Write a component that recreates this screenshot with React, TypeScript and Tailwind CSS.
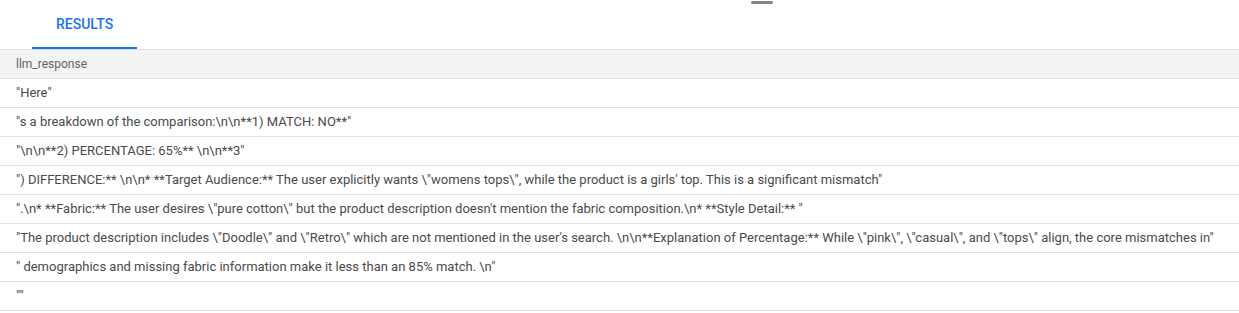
import React from "react";

const rows = [
  '"Here"',
  '"s a breakdown of the comparison:\\n\\n**1) MATCH: NO**"',
  '"\\n\\n**2) PERCENTAGE: 65%** \\n\\n**3"',
  '") DIFFERENCE:** \\n\\n* **Target Audience:** The user explicitly wants \\"womens tops\\", while the product is a girls\' top. This is a significant mismatch"',
  '".\\n* **Fabric:** The user desires \\"pure cotton\\" but the product description doesn\'t mention the fabric composition.\\n* **Style Detail:** "',
  '"The product description includes \\"Doodle\\" and \\"Retro\\" which are not mentioned in the user\'s search. \\n\\n**Explanation of Percentage:** While \\"pink\\", \\"casual\\", and \\"tops\\" align, the core mismatches in"',
  '" demographics and missing fabric information make it less than an 85% match. \\n"',
  '""',
];

export default function App() {
  return (
    <div className="relative w-[1239px] h-[313px] bg-white overflow-hidden font-['Roboto',sans-serif]">
      {/* drag handle */}
      <div className="absolute left-[751px] top-[1px] w-[22px] h-[3px] rounded-full bg-[#80868b]" />

      {/* tabs */}
      <div className="flex h-[49px] pl-8">
        <div className="flex items-center justify-center px-6 pt-[2px] h-full border-b-2 border-[#1a73e8] text-[14px] font-medium text-[#1a73e8]">
          RESULTS
        </div>
      </div>

      {/* table */}
      <div className="border-t border-[#e0e0e0]">
        <div className="h-[29px] flex items-center px-4 bg-[#f3f3f3] border-b border-[#e0e0e0] text-[12px] text-[#5f6368]">
          llm_response
        </div>
        {rows.map((r, i) => (
          <div
            key={i}
            className="h-[29px] flex items-center px-4 border-b border-[#e0e0e0] text-[13px] text-[#4a4a4a] whitespace-pre"
          >
            {r}
          </div>
        ))}
      </div>
    </div>
  );
}
